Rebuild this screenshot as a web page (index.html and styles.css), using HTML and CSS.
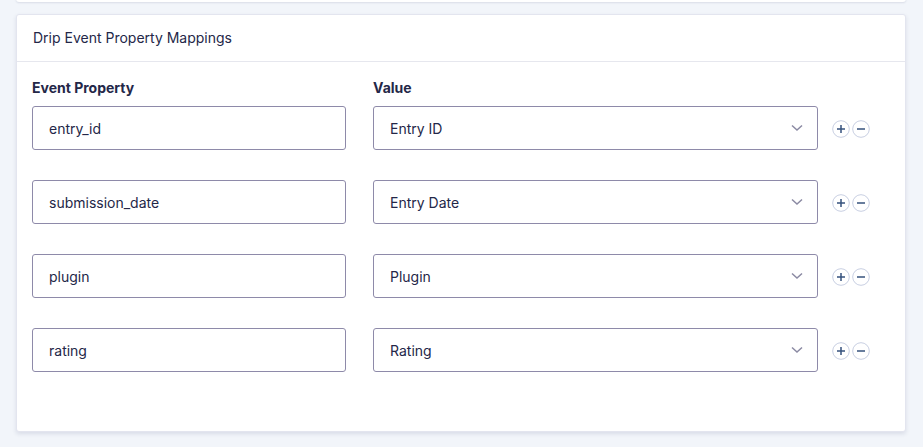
FILE: index.html
```html
<!DOCTYPE html>
<html>
<head>
<meta charset="utf-8">
<link rel="stylesheet" href="styles.css">
</head>
<body>
<div class="prev-card"></div>
<section class="card">
  <header class="card-header">Drip Event Property Mappings</header>
  <div class="card-body">
    <div class="labels">
      <div class="label col-prop">Event Property</div>
      <div class="label col-val">Value</div>
    </div>
    <div class="row">
      <div class="field col-prop">entry_id</div>
      <div class="field select col-val">Entry ID<svg class="chev" width="12" height="8" viewBox="0 0 12 8"><path d="M1 1.5 L6 6 L11 1.5" fill="none" stroke="#8b8aa3" stroke-width="1.5"/></svg></div>
      <div class="actions"><span class="btn"><svg width="18" height="18" viewBox="0 0 18 18"><circle cx="9" cy="9" r="8.3" fill="#fff" stroke="#c8cfe2"/><path d="M9 5v8M5 9h8" stroke="#36527d" stroke-width="1.5"/></svg></span><span class="btn"><svg width="18" height="18" viewBox="0 0 18 18"><circle cx="9" cy="9" r="8.3" fill="#fff" stroke="#c8cfe2"/><path d="M5 9h8" stroke="#36527d" stroke-width="1.5"/></svg></span></div>
    </div>
    <div class="row">
      <div class="field col-prop">submission_date</div>
      <div class="field select col-val">Entry Date<svg class="chev" width="12" height="8" viewBox="0 0 12 8"><path d="M1 1.5 L6 6 L11 1.5" fill="none" stroke="#8b8aa3" stroke-width="1.5"/></svg></div>
      <div class="actions"><span class="btn"><svg width="18" height="18" viewBox="0 0 18 18"><circle cx="9" cy="9" r="8.3" fill="#fff" stroke="#c8cfe2"/><path d="M9 5v8M5 9h8" stroke="#36527d" stroke-width="1.5"/></svg></span><span class="btn"><svg width="18" height="18" viewBox="0 0 18 18"><circle cx="9" cy="9" r="8.3" fill="#fff" stroke="#c8cfe2"/><path d="M5 9h8" stroke="#36527d" stroke-width="1.5"/></svg></span></div>
    </div>
    <div class="row">
      <div class="field col-prop">plugin</div>
      <div class="field select col-val">Plugin<svg class="chev" width="12" height="8" viewBox="0 0 12 8"><path d="M1 1.5 L6 6 L11 1.5" fill="none" stroke="#8b8aa3" stroke-width="1.5"/></svg></div>
      <div class="actions"><span class="btn"><svg width="18" height="18" viewBox="0 0 18 18"><circle cx="9" cy="9" r="8.3" fill="#fff" stroke="#c8cfe2"/><path d="M9 5v8M5 9h8" stroke="#36527d" stroke-width="1.5"/></svg></span><span class="btn"><svg width="18" height="18" viewBox="0 0 18 18"><circle cx="9" cy="9" r="8.3" fill="#fff" stroke="#c8cfe2"/><path d="M5 9h8" stroke="#36527d" stroke-width="1.5"/></svg></span></div>
    </div>
    <div class="row">
      <div class="field col-prop">rating</div>
      <div class="field select col-val">Rating<svg class="chev" width="12" height="8" viewBox="0 0 12 8"><path d="M1 1.5 L6 6 L11 1.5" fill="none" stroke="#8b8aa3" stroke-width="1.5"/></svg></div>
      <div class="actions"><span class="btn"><svg width="18" height="18" viewBox="0 0 18 18"><circle cx="9" cy="9" r="8.3" fill="#fff" stroke="#c8cfe2"/><path d="M9 5v8M5 9h8" stroke="#36527d" stroke-width="1.5"/></svg></span><span class="btn"><svg width="18" height="18" viewBox="0 0 18 18"><circle cx="9" cy="9" r="8.3" fill="#fff" stroke="#c8cfe2"/><path d="M5 9h8" stroke="#36527d" stroke-width="1.5"/></svg></span></div>
    </div>
  </div>
</section>
</body>
</html>
```

FILE: styles.css
```css
* { box-sizing: border-box; }
html, body { margin: 0; padding: 0; }
body {
  background: #f2f5fa;
  font-family: Inter, "Noto Sans", sans-serif;
  color: #242748;
  width: 923px;
  height: 447px;
  overflow: hidden;
}
.prev-card {
  margin: -20px 0 0 16px;
  width: 890px;
  height: 22px;
  background: #fff;
  box-shadow: 0 1px 2px rgba(40, 50, 100, 0.12);
  border-radius: 0 0 3px 3px;
}
.card {
  margin: 12px 0 0 16px;
  width: 890px;
  height: 418px;
  background: #fff;
  border: 1px solid #e3e5ef;
  border-radius: 3px;
  box-shadow: 0 2px 4px rgba(40, 50, 100, 0.12);
}
.card-header {
  height: 47px;
  padding: 0 16px;
  display: flex;
  align-items: center;
  font-size: 14px;
  border-bottom: 1px solid #e6e7ee;
  padding-bottom: 1px;
}
.card-body {
  padding: 17px 15px 0 15px;
}
.labels {
  display: flex;
  gap: 27px;
  font-size: 14px;
  font-weight: 700;
  height: 17px;
  margin-bottom: 10px;
}
.col-prop { width: 314px; flex: none; }
.col-val { width: 445px; flex: none; }
.row {
  display: flex;
  align-items: center;
  gap: 27px;
  margin-bottom: 30px;
}
.field {
  height: 44px;
  border: 1px solid #8e8aa9;
  border-radius: 3px;
  padding: 0 16px;
  display: flex;
  align-items: center;
  font-size: 14px;
  color: #242748;
}
.select {
  justify-content: space-between;
  padding-right: 14px;
}
.chev { display: block; }
.actions {
  display: flex;
  gap: 2px;
  margin-left: -13px;
  padding-top: 1px;
}
.btn { display: block; width: 18px; height: 18px; }
.btn svg { display: block; }
```
